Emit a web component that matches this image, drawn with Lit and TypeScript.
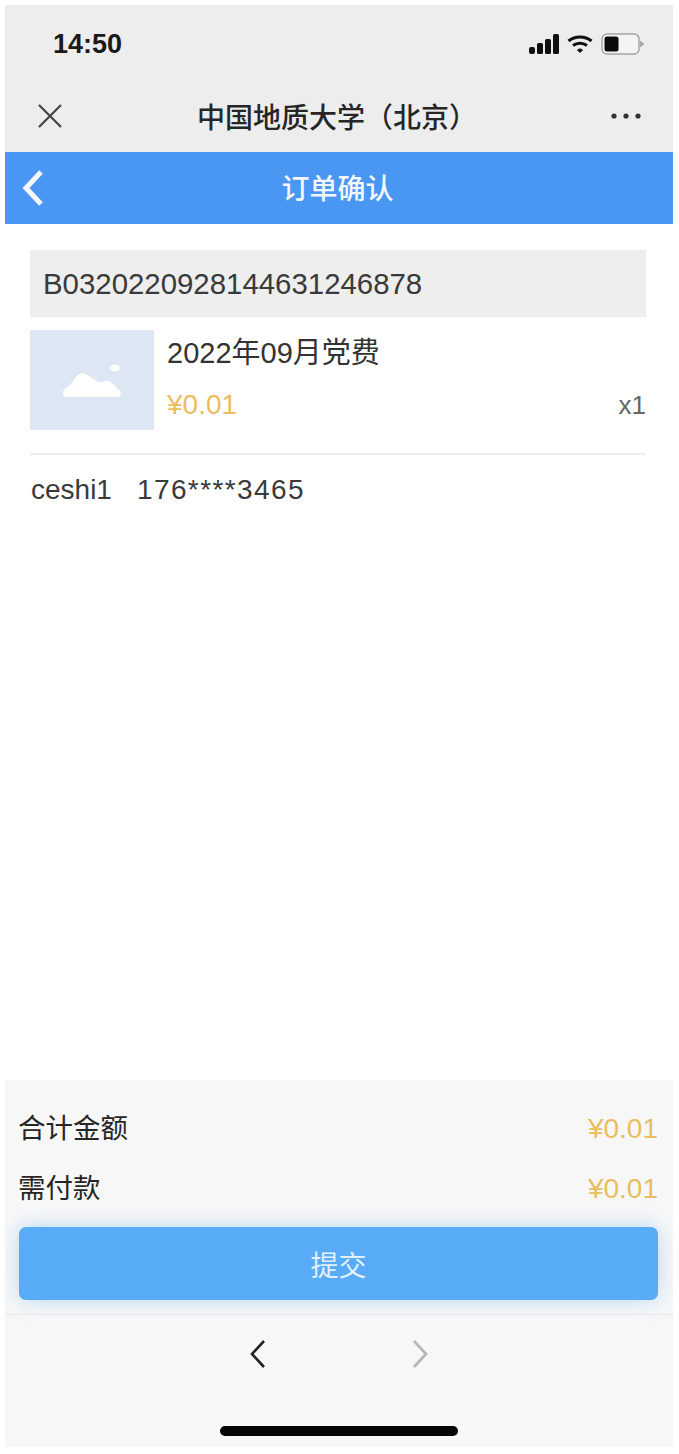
import { LitElement, html, css } from 'lit';
import { customElement } from 'lit/decorators.js';

@customElement('app-root')
export class AppRoot extends LitElement {
  static override styles = css`
    :host {
      display: block;
      box-sizing: border-box;
      height: 1454px;
      padding: 5px 6px 7px 5px;
      background: #fff;
      font-family: 'Liberation Sans', 'Noto Sans CJK SC', sans-serif;
      color: #333;
    }

    .screen {
      height: 100%;
      display: flex;
      flex-direction: column;
      background: #fff;
    }

    .chrome {
      background: #ededed;
      height: 147px;
      box-sizing: border-box;
      display: flex;
      flex-direction: column;
    }

    .status {
      display: flex;
      justify-content: space-between;
      align-items: center;
      height: 78px;
      padding: 0 28px 0 48px;
    }

    .time {
      font-size: 27px;
      font-weight: 700;
      color: #1a1a1a;
    }

    .status-icons {
      display: flex;
      align-items: center;
      gap: 8px;
    }

    .wechat {
      flex: 1;
      display: flex;
      align-items: center;
      justify-content: space-between;
      padding: 0 32px 4px 32px;
    }

    .wechat-title {
      font-size: 28px;
      font-weight: 500;
      color: #262626;
    }

    .bar {
      height: 72px;
      background: #4a96f3;
      display: flex;
      align-items: center;
      justify-content: center;
      position: relative;
      box-sizing: border-box;
      padding: 3px 3px 0 0;
      color: #f2f7fd;
      font-size: 28px;
      line-height: 70px;
      font-weight: 500;
    }

    .back {
      position: absolute;
      left: 16px;
      top: 18px;
    }

    main {
      flex: 1;
      padding: 26px 27px 0 25px;
    }

    .order-no {
      background: #eeeeee;
      height: 67px;
      display: flex;
      align-items: center;
      padding-left: 13px;
      box-sizing: border-box;
      font-size: 29.4px;
      color: #3a3a3a;
    }

    .item {
      display: flex;
      margin-top: 13px;
      height: 100px;
      gap: 13px;
      padding-bottom: 23px;
      border-bottom: 2px solid #eeeeee;
    }

    .thumb {
      width: 124px;
      height: 100px;
      background: #dce7f3;
      display: flex;
      align-items: center;
      justify-content: center;
      flex: none;
    }

    .info {
      flex: 1;
      display: flex;
      flex-direction: column;
      justify-content: space-between;
    }

    .item-name {
      font-size: 29px;
      line-height: 46px;
      color: #333;
    }

    .item-foot {
      display: flex;
      justify-content: space-between;
      align-items: center;
      line-height: 50px;
    }

    .price {
      color: #e9bd60;
      font-size: 28px;
    }

    .qty {
      font-size: 26px;
      color: #666;
    }

    .contact {
      margin-top: 17px;
      padding-left: 1px;
      font-size: 28px;
      line-height: 36px;
      color: #3a3a3a;
    }

    .contact span {
      margin-left: 25px;
      letter-spacing: 1.4px;
    }

    footer {
      background: #f7f7f7;
      height: 367px;
      flex: none;
      box-sizing: border-box;
      display: flex;
      flex-direction: column;
    }

    .sums {
      padding: 19px 15px 0 13px;
    }

    .sum {
      display: flex;
      justify-content: space-between;
      align-items: center;
      height: 60px;
      line-height: 40px;
      font-size: 27.5px;
      color: #262626;
    }

    .submit {
      display: flex;
      align-items: center;
      justify-content: center;
      margin: 8px 15px 0 14px;
      height: 73px;
      border-radius: 7px;
      background: #58abf6;
      box-shadow: 0 0 20px rgba(88, 171, 246, 0.4);
      color: #e3f0fc;
      font-size: 28px;
    }

    .browser-nav {
      margin-top: 14px;
      border-top: 1px solid #e6e8eb;
      display: flex;
      justify-content: center;
      gap: 144px;
      padding-top: 24px;
    }

    .home {
      width: 238px;
      height: 10px;
      border-radius: 5px;
      background: #050505;
      margin: 57px auto 0;
    }
  `;

  override render() {
    return html`
      <div class="screen">
        <div class="chrome">
          <div class="status">
            <span class="time">14:50</span>
            <div class="status-icons">
              <svg width="30" height="20" viewBox="0 0 30 20" fill="#111">
                <rect x="0" y="13" width="6" height="7" rx="2"></rect>
                <rect x="8" y="9" width="6" height="11" rx="1.5"></rect>
                <rect x="16" y="5" width="6" height="15" rx="1.5"></rect>
                <rect x="24" y="0" width="6" height="20" rx="1.5"></rect>
              </svg>
              <svg width="26" height="20" viewBox="0 0 26 20" fill="none" stroke="#111" stroke-width="3">
                <path d="M1.5 7 C8 1.5 18 1.5 24.5 7"></path>
                <path d="M6 11.5 C10 8.5 16 8.5 20 11.5"></path>
                <path d="M10.5 16 L13 18.5 L15.5 16 C14 14.7 12 14.7 10.5 16Z" fill="#111" stroke-width="1"></path>
              </svg>
              <svg width="44" height="22" viewBox="0 0 44 22" fill="none">
                <rect x="1" y="1" width="37" height="20" rx="5" fill="#f4f4f4" stroke="#a5a5a5" stroke-width="1.5"></rect>
                <rect x="3.5" y="3.5" width="14" height="15" rx="2.5" fill="#0a0a0a"></rect>
                <path d="M39 7.5 L43.5 11 L39 14.5Z" fill="#aaa"></path>
              </svg>
            </div>
          </div>
          <div class="wechat">
            <svg width="26" height="26" viewBox="0 0 26 26" fill="none" stroke="#444" stroke-width="2.2">
              <path d="M2 2 L24 24 M24 2 L2 24"></path>
            </svg>
            <span class="wechat-title">中国地质大学（北京）</span>
            <svg width="30" height="6" viewBox="0 0 30 6" fill="#333">
              <circle cx="3" cy="3" r="2.6"></circle>
              <circle cx="15" cy="3" r="2.6"></circle>
              <circle cx="27" cy="3" r="2.6"></circle>
            </svg>
          </div>
        </div>

        <div class="bar">
          <svg class="back" width="24" height="36" viewBox="0 0 24 36" fill="none" stroke="#f4f8fe" stroke-width="5">
            <path d="M20 2 L5 18 L20 34"></path>
          </svg>
          订单确认
        </div>

        <main>
          <div class="order-no">B0320220928144631246878</div>
          <div class="item">
            <div class="thumb">
              <svg width="60" height="34" viewBox="0 0 60 34" fill="#fff">
                <path d="M1 30 C1 26 5 24 8 22 C11 19 15 10 20 10 C25 10 31 17 37 19 C41 20 43 17 47 18 C51 20 55 25 58 28 C60 31 58 34 55 34 L5 34 C2 34 1 32 1 30Z"></path>
                <ellipse cx="53" cy="5" rx="5" ry="3.5"></ellipse>
              </svg>
            </div>
            <div class="info">
              <div class="item-name">2022年09月党费</div>
              <div class="item-foot">
                <span class="price">¥0.01</span>
                <span class="qty">x1</span>
              </div>
            </div>
          </div>
          <div class="contact">ceshi1<span>176****3465</span></div>
        </main>

        <footer>
          <div class="sums">
            <div class="sum"><span>合计金额</span><span class="price">¥0.01</span></div>
            <div class="sum"><span>需付款</span><span class="price">¥0.01</span></div>
          </div>
          <div class="submit">提交</div>
          <div class="browser-nav">
            <svg width="18" height="30" viewBox="0 0 18 30" fill="none" stroke="#222" stroke-width="2.6">
              <path d="M15 2 L3 15 L15 28"></path>
            </svg>
            <svg width="18" height="30" viewBox="0 0 18 30" fill="none" stroke="#b5b5b5" stroke-width="2.6">
              <path d="M3 2 L15 15 L3 28"></path>
            </svg>
          </div>
          <div class="home"></div>
        </footer>
      </div>
    `;
  }
}
